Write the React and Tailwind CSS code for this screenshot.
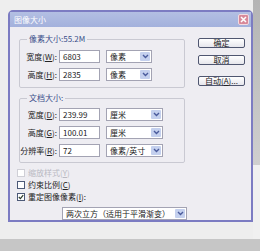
import React from "react";

const font = "font-['Noto_Sans_CJK_SC','Noto_Sans',sans-serif]";

function Arrow() {
  return (
    <span className="m-[1px] w-[10px] self-stretch rounded-[1px] bg-[#c4d0ee] flex items-center justify-center">
      <svg width="7" height="5" viewBox="0 0 7 5">
        <path d="M1 1 L3.5 3.5 L6 1" fill="none" stroke="#4a5b9c" strokeWidth="1.4" />
      </svg>
    </span>
  );
}

function Select({ value, width }) {
  return (
    <div className={`h-[13px] bg-white border border-[#a3a3b3] flex items-stretch ${width}`}>
      <span className="flex-1 pl-[3px] leading-[11px] text-[8px] text-[#222] whitespace-nowrap overflow-hidden">
        {value}
      </span>
      <Arrow />
    </div>
  );
}

function Row({ label, hot, value, unit, selWidth }) {
  return (
    <div className="flex items-center h-[13px]">
      <span className="w-[37px] text-right text-[8px] leading-[10px] text-[#222] whitespace-nowrap">
        {label}(<u>{hot}</u>):
      </span>
      <div className="ml-[2px] w-[41px] h-[13px] bg-white border border-[#a3a3b3] pl-[3px] text-[8px] leading-[11px] text-[#222]">
        {value}
      </div>
      <div className="ml-[6px]">
        <Select value={unit} width={selWidth} />
      </div>
    </div>
  );
}

function Group({ title, children, className }) {
  return (
    <fieldset className={`w-[166px] border border-[#c9c9d2] rounded-[2px] ${className}`}>
      <legend className="ml-[7px] px-[2px] text-[8px] leading-[10px] text-[#3b4f8a]">{title}</legend>
      {children}
    </fieldset>
  );
}

function Check({ label, hot, checked, disabled, suffix = "" }) {
  return (
    <div className="flex items-center h-[12px] gap-[3px]">
      <span
        className={`w-[8px] h-[8px] border flex items-center justify-center bg-white ${
          disabled ? "border-[#cfcfd6]" : "border-[#4d5a78]"
        }`}
      >
        {checked && (
          <svg width="6" height="6" viewBox="0 0 6 6">
            <path d="M0.8 3 L2.4 4.6 L5.2 1.2" fill="none" stroke="#2b3b2b" strokeWidth="1.2" />
          </svg>
        )}
      </span>
      <span className={`text-[8px] leading-[10px] ${disabled ? "text-[#b9b9c2]" : "text-[#222]"}`}>
        {label}(<u>{hot}</u>){suffix}
      </span>
    </div>
  );
}

function Btn({ children, className = "" }) {
  return (
    <div
      className={`w-[47px] h-[10px] rounded-[2px] border border-[#4f5670] bg-gradient-to-b from-white to-[#e6e6ec] flex items-center justify-center text-[8px] leading-[8px] text-[#222] ${className}`}
    >
      {children}
    </div>
  );
}

export default function App() {
  return (
    <div className={`w-[260px] h-[251px] bg-[#eeeeee] flex flex-col overflow-hidden ${font}`}>
      <div className="flex h-[239px]">
        <div className="w-[8px]" />
        <div className="pt-[10px]">
          <div className="w-[245px] h-[212px] rounded-t-[5px] border-2 border-[#7c7cc2] bg-[#eeedf2] flex flex-col">
            {/* title bar */}
            <div className="h-[15px] bg-gradient-to-b from-[#b3bfe3] to-[#a3b1dc] flex items-center pl-[4px] pr-[2px]">
              <span className="text-[8px] leading-[10px] text-white">图像大小</span>
              <span className="ml-auto w-[11px] h-[11px] rounded-[2px] border border-[#f3dbe1] bg-[#d8899a] flex items-center justify-center">
                <svg width="7" height="7" viewBox="0 0 7 7">
                  <path d="M1 1 L6 6 M6 1 L1 6" stroke="white" strokeWidth="1.5" />
                </svg>
              </span>
            </div>

            {/* body */}
            <div className="flex pl-[7px]">
              <div className="flex flex-col pt-[7px]">
                <Group title="像素大小:55.2M" className="ml-[2px] pt-[6px] pb-[6px]">
                  <div className="flex flex-col gap-[5px]">
                    <Row label="宽度" hot="W" value="6803" unit="像素" selWidth="w-[46px]" />
                    <Row label="高度" hot="H" value="2835" unit="像素" selWidth="w-[46px]" />
                  </div>
                </Group>
                <Group title="文档大小:" className="ml-[2px] mt-[5px] pt-[5px] pb-[5px]">
                  <div className="flex flex-col gap-[5px]">
                    <Row label="宽度" hot="D" value="239.99" unit="厘米" selWidth="w-[57px]" />
                    <Row label="高度" hot="G" value="100.01" unit="厘米" selWidth="w-[57px]" />
                    <Row label="分辨率" hot="R" value="72" unit="像素/英寸" selWidth="w-[57px]" />
                  </div>
                </Group>
                <div className="flex flex-col mt-[4px]">
                  <Check label="缩放样式" hot="Y" disabled />
                  <Check label="约束比例" hot="C" />
                  <Check label="重定图像像素" hot="I" suffix=":" checked />
                </div>
                <div className="mt-[4px] ml-[45px]">
                  <Select value="两次立方（适用于平滑渐变）" width="w-[125px]" />
                </div>
              </div>

              <div className="ml-[11px] pt-[11px] flex flex-col">
                <Btn>确定</Btn>
                <Btn className="mt-[7px]">取消</Btn>
                <Btn className="mt-[11px]">
                  自动(<u>A</u>)...
                </Btn>
              </div>
            </div>
          </div>
        </div>
        <div className="flex-1 flex flex-col">
          <div className="h-[165px] bg-gradient-to-b from-[#b4b4b4] to-[#cfcfcf]" />
          <div className="flex-1 bg-[#f0f0f0]" />
        </div>
      </div>
      <div className="flex-1 bg-[#c6c6c6]" />
    </div>
  );
}
